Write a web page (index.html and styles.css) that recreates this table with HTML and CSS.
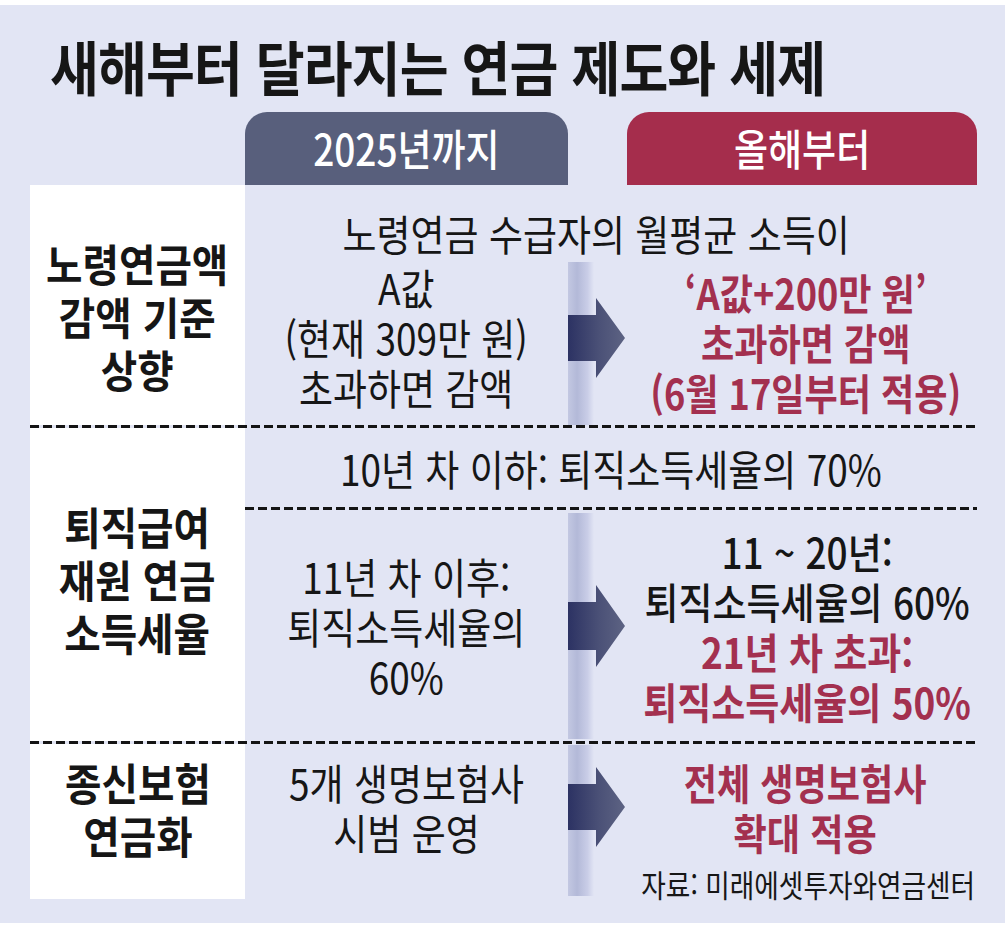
FILE: index.html
```html
<!DOCTYPE html>
<html lang="ko">
<head>
<meta charset="utf-8">
<title>새해부터 달라지는 연금 제도와 세제</title>
<link rel="stylesheet" href="styles.css">
</head>
<body>
<div class="page">
  <h1 class="title"><span class="sq">새해부터 달라지는 연금 제도와 세제</span></h1>

  <div class="table">
    <div class="head">
      <div class="head-blank"></div>
      <div class="tab tab-old"><span class="sq">2025년까지</span></div>
      <div class="tab-cell"><div class="tab tab-new"><span class="sq">올해부터</span></div></div>
    </div>

    <div class="row row1">
      <div class="label"><div class="txt bold">노령연금액<br>감액 기준<br>상향</div></div>
      <div class="body">
        <div class="span-line span1"><div class="txt">노령연금 수급자의 월평균 소득이</div></div>
        <div class="sub sub1">
          <div class="old"><div class="txt">A값<br>(현재 309만 원)<br>초과하면 감액</div></div>
          <div class="new">
            <div class="arrow-col">
              <svg class="arrow" width="58" height="80" viewBox="0 0 58 80">
                <defs><linearGradient id="ag1" x1="0" y1="0" x2="1" y2="0"><stop offset="0" stop-color="#2c3263"/><stop offset="0.55" stop-color="#4b5177"/><stop offset="1" stop-color="#5d6383"/></linearGradient></defs>
                <path d="M0 17 H28 V0 L57 40 L28 80 V63 H0 Z" fill="url(#ag1)"/>
              </svg>
            </div>
            <div class="new-text"><div class="txt red">‘A값+200만 원’<br>초과하면 감액<br>(6월 17일부터 적용)</div></div>
          </div>
        </div>
      </div>
    </div>
    <div class="dash"></div>

    <div class="row row2">
      <div class="label"><div class="txt bold">퇴직급여<br>재원 연금<br>소득세율</div></div>
      <div class="body">
        <div class="span-line span2"><div class="txt">10년 차 이하: 퇴직소득세율의 70%</div></div>
        <div class="dash"></div>
        <div class="sub sub2">
          <div class="old"><div class="txt">11년 차 이후:<br>퇴직소득세율의<br>60%</div></div>
          <div class="new">
            <div class="arrow-col">
              <svg class="arrow" width="58" height="82" viewBox="0 0 58 82">
                <defs><linearGradient id="ag2" x1="0" y1="0" x2="1" y2="0"><stop offset="0" stop-color="#2c3263"/><stop offset="0.55" stop-color="#4b5177"/><stop offset="1" stop-color="#5d6383"/></linearGradient></defs>
                <path d="M0 17 H28 V0 L57 41 L28 82 V65 H0 Z" fill="url(#ag2)"/>
              </svg>
            </div>
            <div class="new-text"><div class="txt mid">11 ~ 20년:<br>퇴직소득세율의 60%<br><span class="red">21년 차 초과:<br>퇴직소득세율의 50%</span></div></div>
          </div>
        </div>
      </div>
    </div>
    <div class="dash"></div>

    <div class="row row3">
      <div class="label"><div class="txt bold">종신보험<br>연금화</div></div>
      <div class="body">
        <div class="sub sub3">
          <div class="old"><div class="txt">5개 생명보험사<br>시범 운영</div></div>
          <div class="new">
            <div class="arrow-col">
              <svg class="arrow" width="58" height="80" viewBox="0 0 58 80">
                <defs><linearGradient id="ag3" x1="0" y1="0" x2="1" y2="0"><stop offset="0" stop-color="#2c3263"/><stop offset="0.55" stop-color="#4b5177"/><stop offset="1" stop-color="#5d6383"/></linearGradient></defs>
                <path d="M0 17 H28 V0 L57 40 L28 80 V63 H0 Z" fill="url(#ag3)"/>
              </svg>
            </div>
            <div class="new-stack">
              <div class="new-text"><div class="txt red">전체 생명보험사<br>확대 적용</div></div>
              <div class="source"><span class="sq">자료: 미래에셋투자와연금센터</span></div>
            </div>
          </div>
        </div>
      </div>
    </div>
  </div>
</div>
</body>
</html>
```

FILE: styles.css
```css
* { box-sizing: border-box; }
html, body { margin: 0; padding: 0; background: #ffffff; }
body {
  font-family: "Noto Sans CJK KR", "Noto Sans", sans-serif;
  color: #161616;
}
.page {
  width: 1005px;
  height: 918px;
  margin-top: 5px;
  background: #e2e5f4;
  padding-top: 31px;
}
.title {
  margin: 0 0 0 50px;
  height: 76px;
  font-size: 59px;
  line-height: 59px;
  font-weight: 700;
  letter-spacing: -1px;
  white-space: nowrap;
}
.title .sq { display: inline-block; transform: scaleX(0.9); transform-origin: left center; }

.table { margin-left: 30px; width: 947px; }

.head {
  display: grid;
  grid-template-columns: 215px 323px 409px;
  height: 73px;
}
.tab {
  height: 73px;
  border-radius: 22px 22px 0 0;
  color: #ffffff;
  font-size: 43px;
  font-weight: 500;
  display: flex;
  align-items: center;
  justify-content: center;
  padding-bottom: 4px;
  white-space: nowrap;
}
.tab .sq { display: inline-block; transform: scaleX(0.86); }
.tab-old { background: #585f7c; }
.tab-cell { padding-left: 59px; }
.tab-new { background: #a52d4c; }

.row {
  display: grid;
  grid-template-columns: 215px 732px;
}
.label {
  background: #ffffff;
  display: flex;
  align-items: center;
  justify-content: center;
  text-align: center;
}
.txt {
  flex: none;
  font-size: 42px;
  line-height: 50px;
  text-align: center;
  white-space: nowrap;
  transform: scaleX(0.88);
}
.bold { font-size: 44px; font-weight: 700; line-height: 53px; transform: scaleX(0.9); }
.red { color: #a3304f; font-weight: 700; }
.txt.red { transform: scaleX(0.86); }
.mid { font-weight: 500; }

.body { display: flex; flex-direction: column; }
.span-line {
  display: flex;
  align-items: flex-end;
  justify-content: center;
}
.span1 { height: 73px; padding-right: 30px; }
.span2 { height: 79px; align-items: center; }

.sub {
  display: grid;
  grid-template-columns: 323px 409px;
}
.old { display: flex; align-items: center; justify-content: center; min-width: 0; }
.new {
  display: grid;
  grid-template-columns: 58px minmax(0, 1fr);
  align-items: center;
  min-width: 0;
}
.new-text {
  display: flex;
  justify-content: center;
  min-width: 0;
  padding-left: 8px;
}
.sub2 .new-text { padding-left: 12px; }
.arrow-col {
  align-self: stretch;
  display: flex;
  align-items: center;
  background-image: linear-gradient(to right, #c3c8e2 0, #b3b9d8 35%, #c9cde7 75%, #e2e5f4 100%);
  background-size: 26px 100%;
  background-repeat: no-repeat;
}
.arrow { display: block; }

.sub1 { height: 167px; }
.sub1 .arrow-col { margin-top: 4px; padding-bottom: 12px; }
.sub1 .old { padding-bottom: 10px; }
.sub2 { height: 231px; }
.sub2 .arrow-col { margin: 3px 0 2px; }
.row1 .label { height: 240px; padding-top: 22px; }
.row2 .label { height: 313px; padding-bottom: 10px; }
.row3 .label { height: 155px; padding-bottom: 26px; }
.sub3 { height: 155px; }
.sub3 .old { align-self: start; padding-top: 13px; }
.sub3 .arrow-col { margin-top: 1px; margin-bottom: 6px; align-items: flex-start; padding-top: 22px; }
.new-stack {
  align-self: stretch;
  display: flex;
  flex-direction: column;
  padding-top: 13px;
  min-width: 0;
}
.source {
  margin-top: 9px;
  display: flex;
  justify-content: flex-end;
  font-size: 31px;
  line-height: 36px;
  white-space: nowrap;
  padding-right: 2px;
  min-width: 0;
}
.source .sq { flex: none; display: inline-block; transform: scaleX(0.86); transform-origin: right center; }

.dash {
  height: 3px;
  background-image: linear-gradient(to right, #141414 0, #141414 9px, transparent 9px, transparent 13px);
  background-size: 13px 3px;
  background-repeat: repeat-x;
}
.table > .dash { width: 945px; }
```
